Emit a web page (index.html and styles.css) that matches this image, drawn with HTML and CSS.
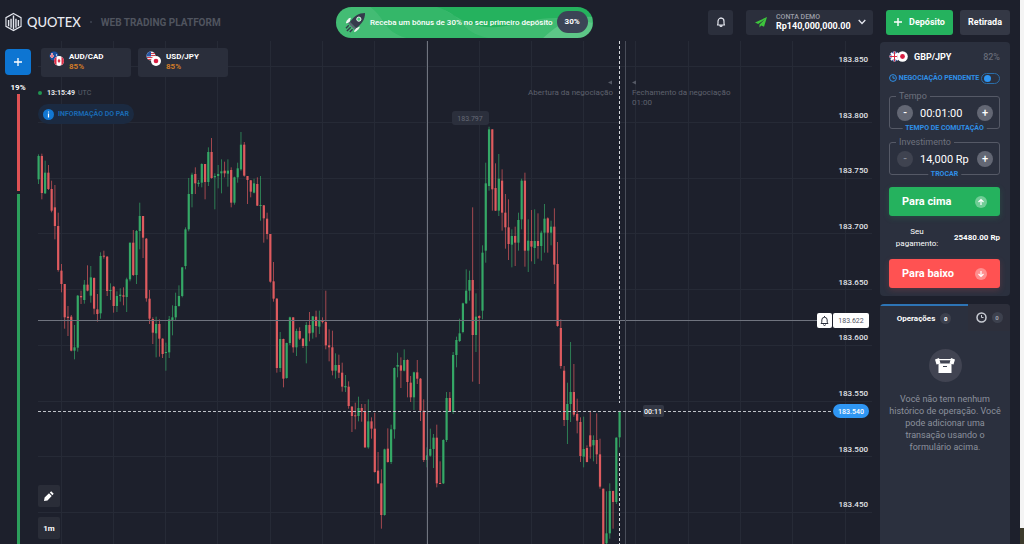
FILE: index.html
```html
<!DOCTYPE html>
<html lang="pt">
<head>
<meta charset="utf-8">
<title>Quotex</title>
<link rel="stylesheet" href="styles.css">
</head>
<body>
<div class="app">
  <header class="header">
    <div class="brand">
      <svg class="brand-mark" viewBox="0 0 18 20" aria-hidden="true">
        <path d="M9 1 17 5.400V14.600L9 19 1 14.600V5.400Z" fill="none" stroke="#e4e6ee" stroke-width="1.200"/>
        <path d="M3.800 14.500V8M6.400 16V6.500M9 18V3M11.600 16V6.500M14.200 14.500V8" stroke="#e4e6ee" stroke-width="1.500"/>
      </svg>
      <span class="brand-name">QUOTEX</span>
      <span class="brand-dot"></span>
      <span class="brand-sub">WEB TRADING PLATFORM</span>
    </div>
    <a class="promo" href="#">
      <svg class="promo-wave" viewBox="0 0 254 31" preserveAspectRatio="none" aria-hidden="true">
        <path d="M0 0H34C50 12 46 24 70 31H0Z" fill="#fff" opacity=".14"/>
        <path d="M34 0H100C130 10 120 24 150 31H70C46 24 50 12 34 0Z" fill="#fff" opacity=".07"/>
        <path d="M100 0C118 6 128 22 160 20C190 17 205 4 254 16V31H150C120 24 130 10 100 0Z" fill="#fff" opacity=".12"/>
        <path d="M205 31C222 14 240 8 254 10V31Z" fill="#fff" opacity=".16"/>
      </svg>
      <svg class="promo-rocket" viewBox="0 0 22 22" aria-hidden="true">
        <path d="M6 6.500C3 7 2 9 1.500 11.500L5 10M15 15.500C14 18.500 12.500 19.500 10 20.500L11.500 17" fill="#f2f6f4" stroke="#f2f6f4"/>
        <path d="M21 1C14 1 10 4 5 10.500L11.500 17C17.500 12.500 21 8 21 1Z" fill="#353b4c"/>
        <path d="M4 11 11 18" stroke="#5b6173" stroke-width="2"/>
        <circle cx="14.500" cy="7.500" r="2.200" fill="#45cf7d" stroke="#f2f6f4"/>
        <path d="M4 14 1 17M6 16 2 20M8 18 5 21" stroke="#353b4c" stroke-width="1.500"/>
      </svg>
      <span class="promo-text">Receba um bônus de 30% no seu primeiro depósito</span>
      <span class="promo-pill">30%</span>
    </a>
    <div class="actions">
      <button class="bell" aria-label="Notificações">
        <svg viewBox="0 0 12 12" width="12" height="12"><path d="M2.500 9C3.300 8 3 6.500 3 5.200A3 3 0 0 1 9 5.200C9 6.500 8.700 8 9.500 9ZM5 9.500A1 1 0 0 0 7 9.500M6 2V1.200" fill="none" stroke="#e4e6ee" stroke-width="1.200" stroke-linejoin="round"/></svg>
      </button>
      <button class="account">
        <svg viewBox="0 0 12 11" width="12" height="11"><path d="M12 0 0 5.500 3.200 7 10 2.200 4.500 7.500V10.500L6.200 8.400 9 9.800Z" fill="#3dc53c"/></svg>
        <span class="account-info"><span class="account-type">CONTA DEMO</span><span class="account-sum">Rp140,000,000.00</span></span>
        <svg viewBox="0 0 8 6" width="8" height="6"><path d="M.7 1 4 4.500 7.300 1" fill="none" stroke="#e4e6ee" stroke-width="1.300"/></svg>
      </button>
      <button class="deposit">
        <svg viewBox="0 0 8 8" width="8" height="8"><path d="M4 0V8M0 4H8" stroke="#fff" stroke-width="1.400"/></svg>
        Depósito
      </button>
      <button class="withdraw">Retirada</button>
    </div>
  </header>

  <main class="main">
    <aside class="rail">
      <button class="add" aria-label="Adicionar ativo"><svg viewBox="0 0 8 8" width="8" height="8"><path d="M4 0V8M0 4H8" stroke="#fff" stroke-width="1.300"/></svg></button>
      <span class="rail-value">19%</span>
      <div class="rail-down"></div>
      <div class="rail-up"></div>
    </aside>

    <section class="stage">
      <svg class="chart" id="chart" viewBox="36 41 844 503" preserveAspectRatio="xMinYMin slice" role="img" aria-label="GBP/JPY">
        <g id="grid" stroke="#262a36"></g>
        <g id="candles"></g>
        <path d="M38 320.500H818M427.500 41V544" stroke="#70747f"/>
        <path d="M625.500 41V544" stroke="#494d59"/>
        <path d="M38 411.500H833" stroke="#bfc2c9" stroke-dasharray="3 2"/>
        <path d="M619.500 41V403M619.500 453V544" stroke="#d5d7dc" stroke-dasharray="3 2"/>
        <g class="note">
          <text x="613" y="95" text-anchor="end">Abertura da negociação</text>
          <text x="632" y="95">Fechamento da negociação</text>
          <text x="632" y="105">01:00</text>
        </g>
        <path d="M608 82.500 612 80.500V84.500ZM632 82.500 636 80.500V84.500Z" fill="#555965"/>
        <rect x="452" y="111" width="37" height="14" rx="3" fill="#2b2f3c"/>
        <text class="peak" x="470" y="121" text-anchor="middle">183.797</text>
        <rect x="643" y="405" width="21" height="12" rx="2" fill="#343845"/>
        <text class="timer" x="653" y="414" text-anchor="middle">00:11</text>
        <g id="prices" class="prices" text-anchor="end"></g>
        <rect x="817" y="313" width="15" height="15" rx="2" fill="#fff"/>
        <path d="M821 323.500C822 322.500 821.800 321.500 821.800 320A2.700 2.700 0 0 1 827.200 320C827.200 321.500 827 322.500 828 323.500ZM823.500 324.500A1 1 0 0 0 825.500 324.500M824.500 317V316" fill="none" stroke="#2b2f3c"/>
        <rect x="833" y="313" width="36" height="15" rx="2" fill="#fff"/>
        <text class="cursor" x="851" y="323" text-anchor="middle">183.622</text>
        <rect x="833" y="404" width="36" height="14" rx="7" fill="#2f96f3"/>
        <text class="current" x="851" y="414" text-anchor="middle">183.540</text>
      </svg>

      <div class="overlay">
        <div class="pairs">
          <button class="pair">
            <svg viewBox="0 0 15 15" width="15" height="15"><circle cx="5" cy="5" r="4.500" fill="#1b4f9e"/><path d="M1 5H5M3 2V7" stroke="#fff" stroke-width="1.600"/><path d="M1 5H5M3 2V7" stroke="#e0354b" stroke-width=".8"/><circle cx="7.500" cy="4" r=".7" fill="#fff"/><circle cx="10" cy="10" r="5" fill="#fff"/><path d="M7.500 5.700V14.300A5 5 0 0 1 7.500 5.700M12.500 5.700V14.300A5 5 0 0 0 12.500 5.700" fill="#d92b45"/><path d="m10 7.500 1.500 2.500L10 12 8.500 10Z" fill="#d92b45"/></svg>
            <span class="pair-info"><span class="pair-name">AUD/CAD</span><span class="pair-rate">85%</span></span>
          </button>
          <button class="pair">
            <svg viewBox="0 0 15 15" width="15" height="15"><circle cx="5" cy="5" r="4.500" fill="#f0f0f5"/><path d="M5 2.500H9M5 4.500H9.500M1 6.500H9M2 8.500H8" stroke="#d5404f"/><path d="M5 .5V5.500H.5A4.500 4.500 0 0 1 5 .5Z" fill="#2757a6"/><circle cx="10" cy="10" r="5" fill="#fff"/><circle cx="10" cy="10" r="2.300" fill="#d81e42"/></svg>
            <span class="pair-info"><span class="pair-name">USD/JPY</span><span class="pair-rate">85%</span></span>
          </button>
        </div>
        <div class="clock"><span class="clock-dot"></span><b>13:15:49</b> UTC</div>
        <button class="info"><svg viewBox="0 0 11 11" width="11" height="11"><circle cx="5.500" cy="5.500" r="5.500" fill="#1278d3"/><path d="M5.500 4.500V8.500M5.500 2.400V3.600" stroke="#fff" stroke-width="1.200"/></svg>INFORMAÇÃO DO PAR</button>
        <div class="tools">
          <button class="tool" aria-label="Desenhar"><svg viewBox="0 0 10 10" width="10" height="10"><path d="M0 10 .6 6.500 5 2.300 7.700 5 3.500 9.400ZM5.800 1.600 7.200.3 9.700 2.800 8.400 4.200Z" fill="#fff"/></svg></button>
          <button class="tool">1m</button>
        </div>
      </div>
    </section>

    <aside class="side">
      <form class="card trade">
        <div class="asset">
          <svg viewBox="0 0 19 11" width="19" height="11"><circle cx="5.500" cy="5.500" r="5" fill="#34519b"/><path d="M2 2 9 9M9 2 2 9M5.500 .5V10.500M.5 5.500H10.500" stroke="#fff" stroke-width="2"/><path d="M5.500 .5V10.500M.5 5.500H10.500" stroke="#d72d45"/><circle cx="13.500" cy="5.500" r="5.300" fill="#fff"/><circle cx="13.500" cy="5.500" r="2.400" fill="#d81e42"/></svg>
          <span class="asset-name">GBP/JPY</span><span class="asset-rate">82%</span>
        </div>
        <label class="pending">
          <svg viewBox="0 0 8 8" width="8" height="8"><circle cx="4" cy="4" r="3.400" fill="none" stroke="#2f8fe6"/><path d="M4 2V4.200H6" fill="none" stroke="#2f8fe6"/></svg>
          <span>NEGOCIAÇÃO PENDENTE</span>
          <input type="checkbox" class="switch">
        </label>
        <fieldset class="field">
          <legend>Tempo</legend>
          <div class="field-row">
            <button type="button" class="step" aria-label="Menos tempo">-</button>
            <input class="value" aria-label="Tempo" value="00:01:00">
            <button type="button" class="step" aria-label="Mais tempo">+</button>
            <a class="swap" href="#">TEMPO DE COMUTAÇÃO</a>
          </div>
        </fieldset>
        <fieldset class="field">
          <legend>Investimento</legend>
          <div class="field-row">
            <button type="button" class="step step-off" aria-label="Menos investimento">-</button>
            <input class="value" aria-label="Investimento" value="14,000 Rp">
            <button type="button" class="step" aria-label="Mais investimento">+</button>
            <a class="swap" href="#">TROCAR</a>
          </div>
        </fieldset>
        <button type="button" class="deal deal-up">Para cima
          <svg viewBox="0 0 12 12" width="12" height="12"><circle cx="6" cy="6" r="6" fill="#fff" opacity=".35"/><path d="M6 9V3.500M3.500 6 6 3.500 8.500 6" fill="none" stroke="#fff" stroke-width="1.200"/></svg></button>
        <div class="payout"><span>Seu pagamento:</span><b>25480.00 Rp</b></div>
        <button type="button" class="deal deal-down">Para baixo
          <svg viewBox="0 0 12 12" width="12" height="12"><circle cx="6" cy="6" r="6" fill="#fff" opacity=".35"/><path d="M6 3V8.500M3.500 6 6 8.500 8.500 6" fill="none" stroke="#fff" stroke-width="1.200"/></svg></button>
      </form>
      <section class="card orders">
        <div class="tabs">
          <button class="tab tab-on">Operações <span class="count">0</span></button>
          <button class="tab tab-off" aria-label="Histórico"><svg viewBox="0 0 11 11" width="11" height="11"><circle cx="5.500" cy="5.500" r="4.500" fill="none" stroke="#c9ccd4" stroke-width="1.500"/><path d="M5.500 3V5.500H7.500" fill="none" stroke="#c9ccd4"/></svg><span class="count">0</span></button>
        </div>
        <div class="empty">
          <span class="empty-icon"><svg viewBox="0 0 20 16" width="20" height="16"><path d="M3.500 5.500H16.500V15H3.500Z" fill="#fff"/><path d="M0 1.500 4 0 5.500 5.500 1.500 6.500ZM20 1.500 16 0 14.500 5.500 18.500 6.500Z" fill="#fff"/><path d="M4 1.700H16" stroke="#fff" stroke-width="1.200"/><path d="M8 8.500H12" stroke="#3b3f4d" stroke-width="1.200"/></svg></span>
          <p>Você não tem nenhum histórico de operação. Você pode adicionar uma transação usando o formulário acima.</p>
        </div>
      </section>
    </aside>
  </main>
</div>
<div class="edge"></div>
<script src="chart.js"></script>
</body>
</html>
```
FILE: styles.css
```css
* { box-sizing: border-box; }
body {
  margin: 0;
  display: flex;
  height: 100vh;
  overflow: hidden;
  background: #1d202c;
  color: #fff;
  font-family: Roboto, "Liberation Sans", sans-serif;
  font-size: 9px;
}
button, input { font: inherit; color: inherit; border: 0; padding: 0; margin: 0; background: none; }
a { color: inherit; text-decoration: none; }
svg { flex: none; display: block; }

.app { flex: 1; min-width: 0; display: flex; flex-direction: column; }
.edge { flex: none; width: 4px; background: linear-gradient(#f4f4f4 97%, #3d3b2c 97%); }

.header { display: flex; align-items: center; justify-content: space-between; height: 41px; padding: 3px 10px 0 5px; }
.brand { display: flex; align-items: center; }
.brand-mark { width: 17px; height: 20px; }
.brand-name { margin-left: 5px; font: 500 13px Lato, sans-serif; color: #e9ebf2; }
.brand-dot { width: 2px; height: 2px; margin: 0 9px; border-radius: 50%; background: #3e4350; }
.brand-sub { font-weight: 700; font-size: 10px; color: #50545f; }

.promo { position: relative; display: flex; align-items: center; height: 31px; padding: 0 5px 0 9px; border-radius: 16px; overflow: hidden; background: #25b25e; }
.promo-wave { position: absolute; inset: 0; width: 100%; height: 100%; }
.promo-rocket { position: relative; width: 21px; height: 21px; }
.promo-text { position: relative; margin: 0 4px; font-size: 8px; font-weight: 500; }
.promo-pill { position: relative; width: 31px; line-height: 22px; border-radius: 11px; background: #3b4556; text-align: center; font-size: 8px; font-weight: 700; }

.actions { display: flex; }
.actions button { display: flex; align-items: center; justify-content: center; height: 25px; border-radius: 3px; background: #2b2f3c; }
.actions .bell { width: 25px; }
.actions .account { width: 127px; margin: 0 13px; gap: 6px; justify-content: space-between; padding: 0 7px 0 9px; }
.account-info { display: flex; flex: 1; flex-direction: column; align-items: flex-start; margin-left: 3px; line-height: 10px; }
.account-type { font-size: 7px; font-weight: 500; color: #9a9da6; line-height: 8px; }
.account-sum { font-weight: 700; font-size: 9px; }
.actions .deposit { width: 67px; gap: 7px; margin-right: 7px; background: #25b25e; font-weight: 700; }
.actions .withdraw { width: 50px; background: #343845; font-weight: 700; }

.main { flex: 1; min-height: 0; display: flex; }
.rail { flex: none; width: 36px; display: flex; flex-direction: column; align-items: center; padding-top: 8px; }
.add { display: flex; align-items: center; justify-content: center; width: 26px; height: 26px; border-radius: 4px; background: #0d75d2; }
.rail-value { margin: 7px 0 1px; line-height: 11px; font-size: 8px; font-weight: 700; }
.rail-down, .rail-up { width: 3px; }
.rail-down { flex: none; height: 97px; background: #df5254; }
.rail-up { flex: 1; margin-top: 3px; background: #2c9f5c; }

.stage { position: relative; flex: 1; min-width: 0; overflow: hidden; }
.chart { position: absolute; inset: 0; width: 100%; height: 100%; }
.chart text { font-size: 8px; }
.chart .note { fill: #5d616c; }
.chart .peak, .chart .cursor, .chart .current, .chart .timer { font-size: 7px; }
.chart .peak { fill: #656976; }
.chart .cursor { fill: #50545f; }
.chart .current, .chart .timer { fill: #fff; font-weight: 500; }
.chart .prices { fill: #e3e5ea; font-weight: 500; }

.overlay { position: relative; height: 100%; display: flex; flex-direction: column; align-items: flex-start; padding: 7px 0 5px 2px; }
.pairs { display: flex; gap: 7px; margin-left: 3px; }
.pair { display: flex; gap: 5px; width: 90px; height: 29px; padding: 3px 8px; align-items: flex-start; border-radius: 3px; background: #2a2e3b; text-align: left; font-weight: 700; font-size: 8px; }
.pair-info { display: flex; flex-direction: column; line-height: 10px; margin-top: 1px; }
.pair-rate { color: #d07b28; }
.clock { display: flex; align-items: center; gap: 3px; margin-top: 11px; line-height: 10px; font-size: 7px; color: #5d616c; }
.clock b { color: #e3e5ea; }
.clock-dot { width: 4px; height: 4px; margin-right: 2px; border-radius: 50%; background: #219451; }
.info { display: flex; align-items: center; gap: 4px; height: 20px; margin-top: 6px; padding: 0 5px; border-radius: 10px; background: #1b2a41; color: #1a69b2; font-size: 7px; font-weight: 700; }
.tools { margin-top: auto; display: flex; flex-direction: column; gap: 10px; }
.tool { display: flex; align-items: center; justify-content: center; width: 22px; height: 22px; border-radius: 2px; background: #2a2d38; font-size: 8px; font-weight: 700; }

.side { flex: none; width: 140px; padding: 1px 10px 0 0; display: flex; flex-direction: column; gap: 8px; }
.card { border-radius: 4px; background: #2b303e; }
.trade { display: flex; flex-direction: column; padding: 8px 10px 8px 9px; }
.asset { display: flex; align-items: center; height: 13px; }
.asset-name { margin-left: 6px; font-size: 9px; font-weight: 700; }
.asset-rate { margin-left: auto; font-size: 9px; font-weight: 500; color: #666a76; }
.pending { display: flex; align-items: center; justify-content: space-between; height: 12px; margin-top: 9px; font-size: 7px; font-weight: 700; color: #2f8fe6; white-space: nowrap; }
.switch { appearance: none; flex: none; display: flex; align-items: center; width: 19px; height: 11px; padding: 0 2px; border: 1px solid #2a6da9; border-radius: 6px; }
.switch::before { content: ""; width: 7px; height: 7px; border-radius: 50%; background: #2f96f3; }
.field { min-width: 0; margin: 7px 0 0; padding: 0; border: 1px solid #555966; border-radius: 3px; }
.field + .field { margin-top: 8px; }
.field legend { margin-left: 6px; padding: 0 3px; line-height: 11px; font-size: 9px; color: #6d717d; }
.field-row { position: relative; display: flex; align-items: center; height: 26px; padding: 0 6px 4px 7px; }
.step { flex: none; width: 16px; height: 16px; line-height: 14px; border-radius: 50%; background: #636774; font-weight: 500; font-size: 11px; }
.step-off { background: #3f4350; color: #858995; }
.value { flex: 1; width: 0; min-width: 0; padding-left: 7px; font-size: 11px; }
.swap { position: absolute; left: 50%; bottom: -4px; transform: translateX(-50%); padding: 0 3px; background: #2b303e; line-height: 8px; font-size: 7px; font-weight: 700; color: #2f8fe6; white-space: nowrap; }
.deal { display: flex; align-items: center; justify-content: space-between; height: 29px; padding: 0 13px; border-radius: 3px; font-size: 11px; font-weight: 700; }
.deal-up { margin-top: 12px; background: #25b25e; box-shadow: 0 2px 6px #25b25e33; }
.deal-down { background: #ff5252; box-shadow: 0 2px 6px #ff525233; }
.payout { display: flex; align-items: center; justify-content: space-between; height: 43px; line-height: 12px; font-size: 8px; }
.payout span { width: 56px; padding: 0 4px; text-align: center; }
.payout b { white-space: nowrap; }

.orders { flex: 1; display: flex; flex-direction: column; overflow: hidden; border-radius: 4px 4px 0 0; }
.tabs { display: flex; height: 27px; }
.tab { display: flex; align-items: center; justify-content: center; gap: 5px; font-size: 8px; font-weight: 700; }
.tab-on { flex: 1; border-top: 2px solid #2d74b5; }
.tab-off { width: 42px; background: #2d2f3b; color: #a2a5af; }
.count { width: 11px; line-height: 11px; border-radius: 50%; background: #3d414e; font-size: 6px; text-align: center; }
.empty { display: flex; flex-direction: column; align-items: center; padding: 18px 6px 0; }
.empty-icon { display: flex; align-items: center; justify-content: center; width: 33px; height: 33px; border-radius: 50%; background: #414452; }
.empty p { margin: 11px 0 0; text-align: center; font-size: 9px; line-height: 12px; color: #8c909d; }
```
FILE: chart.js
```js
// Each row: colour, high, body top, body bottom, low, in thirds of a pixel below `base`.
const segments = [
  { base: 120, rows: `G103 108 178 192,R101 108 219 238,G122 158 220 222,R135 158 207 210,R182 207 272 277,R195 262 318 358,R278 318 450 455,R432 452 492 517,R492 492 592 626,R558 590 594 648,R585 590 692 694,G615 682 692 718,G525 527 683 695,R512 528 532 552,G480 494 540 551,R436 494 512 514,G438 472 527 548,R472 474 566 583,R522 568 582 605,G397 408 580 596,R392 407 410 416,R408 410 513 528,G490 510 513 540,R498 500 558 578,G514 528 558 576,G505 524 528 545,R502 526 530 556,G473 478 531 576,G368 368 478 484,R330 368 465 468,G330 333 465 492,G248 288 333 388,R288 288 353 414,R354 356 535 545,R510 536 596 612,R592 597 638 672,G590 612 640 712,R598 612 656 710,R655 656 702 714,G668 696 699 752,G588 598 697 714,G556 592 600 646,G518 558 592 600,G496 528 558 560,G442 442 528 532,G322 328 438 448,G174 222 328 334,G158 164 222 262,R142 162 190 222,G180 188 192 200,G130 132 188 202,R132 132 186 238,G82 96 186 198,R54 96 174 176,G160 168 172 268,G135 162 168 205,G118 154 160 220,R125 152 160 172,G118 152 161 200,R142 150 248 262,G170 172 248 254,G128 145 172 188,G36 74 148 152,R66 74 167 170,R168 168 180 252,R180 181 215 232,G176 190 218 220,R172 192 257 258,G168 255 258 302,R255 256 295 368,R278 296 342 358,R342 342 485 488,R426 484 536 545,R534 536 744 758,G636 657 744 756,R656 657 776 802,G668 669 774 776,G590 592 669 675,R592 592 682 698,G626 633 682 708,R622 633 656 660,R654 656 678 684,G606 615 678 730,R576 615 640 664,G588 589 638 656,R572 590 618 652,G572 600 620 642,R592 602 606 610,R512 606 676 688,R628 676 682 724,R632 682 752 766,G700 735 752 776,R704 735 758 774` },
  { base: 340, rows: `R68 98 140 155,G105 138 142 156,R124 140 198 206,R198 200 228 276,R188 226 229 268,G170 204 228 244,R192 204 215 245,R192 215 322 324,G178 244 322 326,R232 244 266 296,R218 266 396 398,R336 392 430 432,R388 430 525 566,G326 328 525 527,R265 326 366 368,G254 268 366 372,G82 84 268 296,G38 75 80 112,R52 76 92 144,G28 60 92 94,R58 60 126 172,R108 128 172 186,G95 97 172 210,R60 97 116 132,R114 116 212 243,R178 212 360 366,G322 346 360 382,G266 327 347 350,G282 293 327 384,R254 293 430 442,R364 429 432 432,G298 300 430 432,G156 174 300 306,R156 174 214 216,G36 45 216 222` },
  { base: 60, rows: `G830 840 885 922,G776 820 843 846,G728 730 816 820,G628 692 730 732,G632 660 692 722,R442 660 825 965,G700 770 825 876,R766 768 774 972,G556 578 752 778,G308 370 572 608,G200 208 378 392,R208 208 388 452,R310 384 452 453,G282 356 452 468,R328 362 458 512,R402 458 502 566,R418 502 552 600,G508 528 554 622,R500 528 548 618,G458 480 548 572,G356 362 478 508,R338 362 572 620,G478 542 572 636,R450 543 560 604,G448 543 564 612,R460 543 558 596,G512 518 558 602,G432 476 518 578,R472 475 518 578,G482 500 518 556,R445 500 614 672,R546 612 798 800` },
  { base: 300, rows: `R58 84 198 206,R198 212 360 378,G248 312 360 432,G126 276 312 366,R192 276 344 350,R296 342 362 400,R352 366 468 486,G350 447 470 502,R436 444 486 487,R332 406 440 476,G406 420 436 484,R340 420 463 492,R416 463 560 566,R566 566 732 732,G574 700 730 732,G550 573 700 716,R572 573 606 686,G412 413 606 612,G332 335 412 442` }
];
const colors = { G: "#35a866", R: "#df5b5f" };
const NS = "http://www.w3.org/2000/svg";
const add = (parent, tag, attrs, text) => {
  const el = document.createElementNS(NS, tag);
  for (const k in attrs) el.setAttribute(k, attrs[k]);
  if (text) el.textContent = text;
  document.getElementById(parent).append(el);
};

let i = 0;
for (const { base, rows } of segments) {
  for (const row of rows.split(",")) {
    const color = colors[row[0]];
    const [hi, top, bottom, lo] = row.slice(1).split(" ").map(v => base + v / 3);
    const x = 38.6 + 3.264 * i++;
    add("candles", "rect", { x: x - 0.4, y: hi, width: 0.8, height: lo - hi, fill: color, opacity: 0.85 });
    add("candles", "rect", { x: x - 1.1, y: top, width: 2.2, height: Math.max(1, bottom - top), fill: color });
  }
}
for (let n = 0; n < 9; n++) {
  const y = 66.8 + 55.7 * n;
  add("grid", "path", { d: `M38 ${Math.floor(y) + 0.5}H872` });
  add("prices", "text", { x: 868, y: Math.round(y - 5) }, (183.85 - 0.05 * n).toFixed(3));
}
for (let n = 0; n < 16; n++) {
  add("grid", "path", { d: `M${Math.floor(61 + 52.27 * n) + 0.5} 41V544` });
}
```
